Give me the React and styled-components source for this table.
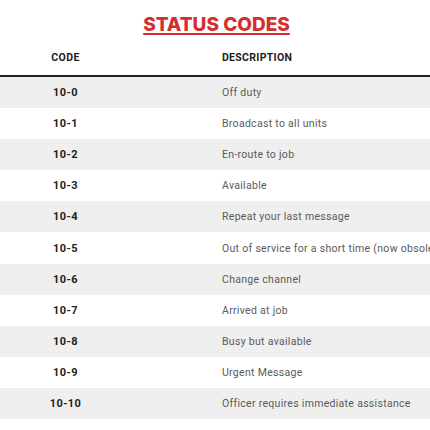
import React from 'react';
import styled, { createGlobalStyle } from 'styled-components';

const GlobalStyle = createGlobalStyle`
  body {
    margin: 0;
    background: #fff;
    font-family: Roboto, "Liberation Sans", sans-serif;
  }
`;

const codes = [
  ['10-0', 'Off duty'],
  ['10-1', 'Broadcast to all units'],
  ['10-2', 'En-route to job'],
  ['10-3', 'Available'],
  ['10-4', 'Repeat your last message'],
  ['10-5', 'Out of service for a short time (now obsolete)'],
  ['10-6', 'Change channel'],
  ['10-7', 'Arrived at job'],
  ['10-8', 'Busy but available'],
  ['10-9', 'Urgent Message'],
  ['10-10', 'Officer requires immediate assistance'],
];

const Page = styled.div`
  width: 430px;
  height: 430px;
  overflow: hidden;
`;

const Title = styled.h1`
  margin: 0;
  padding: 13px 0 0 3px;
  height: 27px;
  text-align: center;
  font-family: Inter, "Open Sans", sans-serif;
  font-weight: 800;
  font-size: 19px;
  line-height: 24px;
  color: #d32f2f;
  text-decoration: underline;
  text-decoration-thickness: 2px;
  text-underline-offset: 2px;
`;

const Row = styled.div`
  display: grid;
  grid-template-columns: 131px 1fr;
  align-items: center;
  height: ${({ $head }) => ($head ? '35px' : '31.1px')};
  background: ${({ $shade }) => ($shade ? '#efefef' : '#fff')};
  border-bottom: ${({ $head }) => ($head ? '2px solid #222' : 'none')};
  white-space: nowrap;
`;

const Code = styled.div`
  text-align: center;
  font-size: ${({ $head }) => ($head ? '10.5px' : '11px')};
  font-weight: 700;
  letter-spacing: 0.4px;
  color: #222;
`;

const Desc = styled.div`
  padding-left: 91px;
  font-size: 10.5px;
  font-weight: ${({ $head }) => ($head ? 700 : 400)};
  letter-spacing: 0.3px;
  color: ${({ $head }) => ($head ? '#222' : '#5a5a5a')};
`;

export default function App() {
  return (
    <Page>
      <GlobalStyle />
      <Title>STATUS CODES</Title>
      <Row $head>
        <Code $head>CODE</Code>
        <Desc $head>DESCRIPTION</Desc>
      </Row>
      {codes.map(([code, desc], i) => (
        <Row key={code} $shade={i % 2 === 0}>
          <Code>{code}</Code>
          <Desc>{desc}</Desc>
        </Row>
      ))}
    </Page>
  );
}
